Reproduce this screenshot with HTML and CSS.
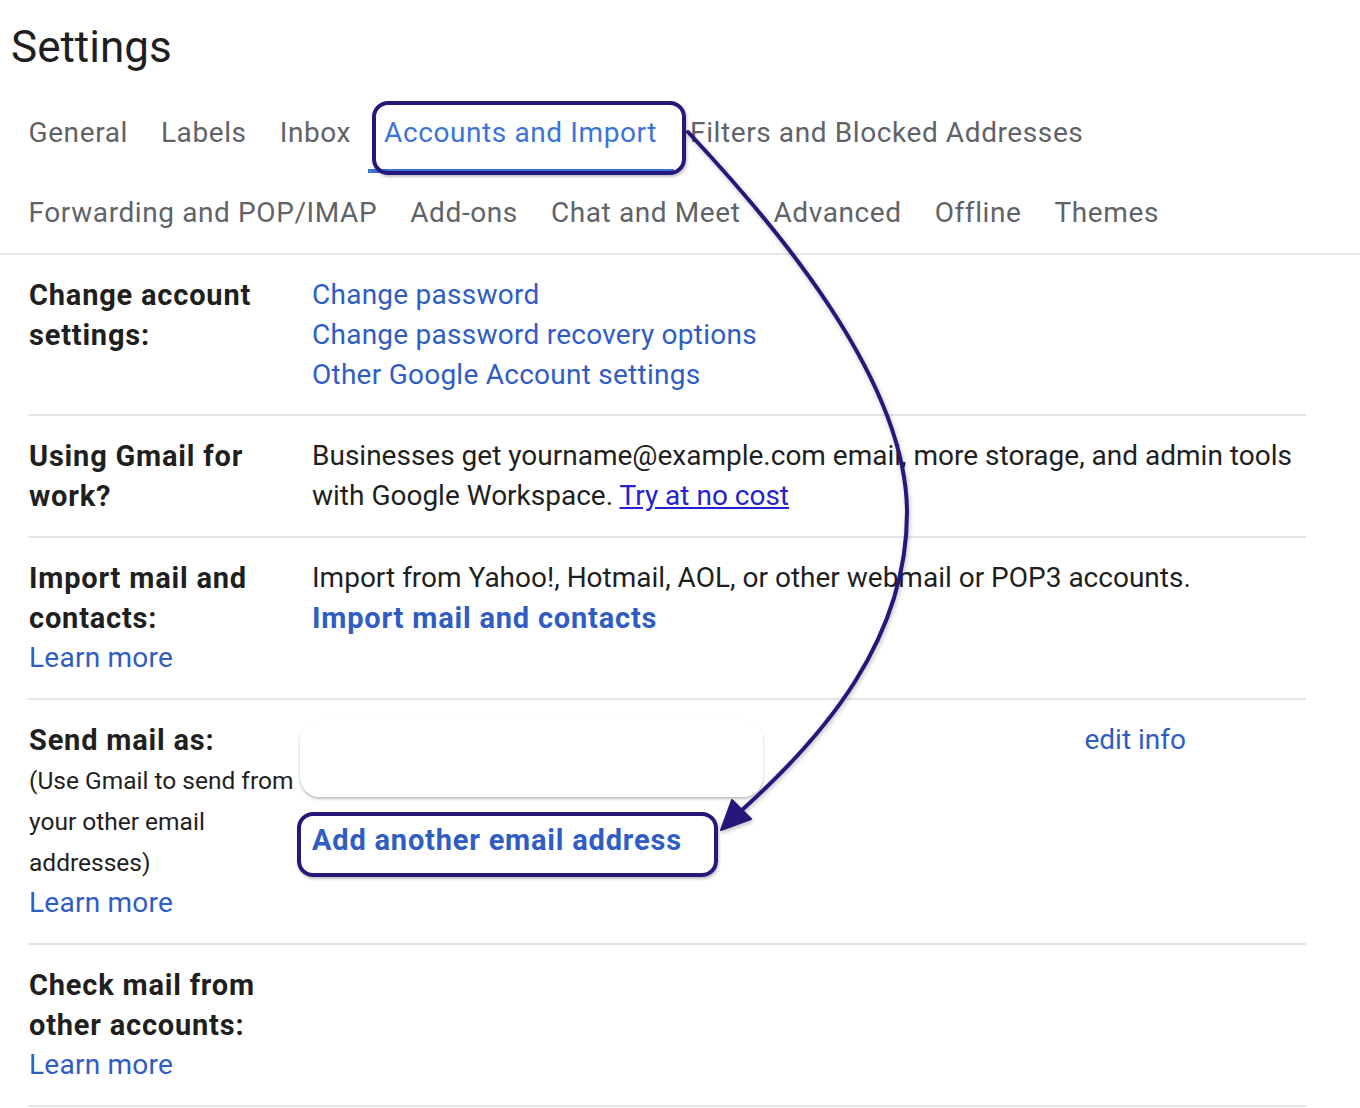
FILE: index.html
```html
<!DOCTYPE html>
<html lang="en">
<head>
    <meta charset="UTF-8">
    <meta name="viewport" content="width=device-width, initial-scale=1.0">
    <title>Settings - Accounts and Import</title>
    <link rel="stylesheet" href="styles.css">
</head>
<body>
    <div class="page">
        <h1 class="title">Settings</h1>

        <div class="tabs">
            <div class="tab-row">
                <a class="tab">General</a>
                <a class="tab">Labels</a>
                <a class="tab">Inbox</a>
                <a class="tab active callout callout-tab">Accounts and Import</a>
                <a class="tab">Filters and Blocked Addresses</a>
            </div>
            <div class="tab-row">
                <a class="tab">Forwarding and POP/IMAP</a>
                <a class="tab">Add-ons</a>
                <a class="tab">Chat and Meet</a>
                <a class="tab">Advanced</a>
                <a class="tab">Offline</a>
                <a class="tab">Themes</a>
            </div>
        </div>

        <div class="settings">
            <div class="row">
                <div class="label">
                    <span class="label-title">Change account settings:</span>
                </div>
                <div class="value">
                    <a class="link">Change password</a><br>
                    <a class="link">Change password recovery options</a><br>
                    <a class="link">Other Google Account settings</a>
                </div>
            </div>

            <div class="row">
                <div class="label">
                    <span class="label-title">Using Gmail for work?</span>
                </div>
                <div class="value">
                    Businesses get yourname@example.com email, more storage, and admin tools
                    with Google Workspace. <a class="plain-link">Try at no cost</a>
                </div>
            </div>

            <div class="row">
                <div class="label">
                    <span class="label-title">Import mail and contacts:</span><br>
                    <a class="link">Learn more</a>
                </div>
                <div class="value">
                    Import from Yahoo!, Hotmail, AOL, or other webmail or POP3 accounts.<br>
                    <a class="link strong">Import mail and contacts</a>
                </div>
            </div>

            <div class="row">
                <div class="label">
                    <span class="label-title">Send mail as:</span>
                    <div class="label-note">(Use Gmail to send from your other email addresses)</div>
                    <a class="link">Learn more</a>
                </div>
                <div class="value">
                    <div class="sender">
                        <div class="sender-card"></div>
                        <a class="link edit">edit info</a>
                    </div>
                    <a class="link strong callout callout-add">Add another email address</a>
                </div>
            </div>

            <div class="row">
                <div class="label">
                    <span class="label-title">Check mail from other accounts:</span><br>
                    <a class="link">Learn more</a>
                </div>
                <div class="value"></div>
            </div>
        </div>

        <!-- annotation arrow drawn over the page -->
        <svg class="arrow" width="1360" height="1108" viewBox="0 0 1360 1108">
            <path d="M 688 132 C 780 230, 905 380, 907 510 C 908 640, 822 738, 742 810"
                  fill="none" stroke="#27177a" stroke-width="4" stroke-linecap="round"/>
            <polygon points="721,830 732,800 751,819" fill="#27177a" stroke="#27177a" stroke-width="2" stroke-linejoin="round"/>
        </svg>
    </div>
</body>
</html>
```

FILE: styles.css
```css
body {
    margin: 0;
    padding: 0;
    background: #fff;
    font-family: Roboto, "Noto Sans", Arial, sans-serif;
    color: #1f1f1f;
}
.page {
    position: relative;
    width: 1360px;
    min-height: 1108px;
}
a {
    cursor: pointer;
}

/* header */
.title {
    margin: 0;
    padding: 19px 0 18px 11px;
    font-size: 44px;
    font-weight: 400;
    line-height: 56px;
    color: #1f1f1f;
}

/* tabs */
.tabs {
    padding-left: 12px;
    border-bottom: 2px solid #e8e8e8;
}
.tab-row {
    display: flex;
    height: 80px;
}
.tab {
    padding: 0 16.5px;
    font-size: 28px;
    line-height: 80px;
    letter-spacing: 0.6px;
    color: #5f6368;
    white-space: nowrap;
}
.tab.active {
    color: #3b73da;
    box-shadow: inset 0 -4px 0 #3b73da;
}

/* callout boxes drawn on top */
.callout {
    position: relative;
}
.callout::after {
    content: "";
    position: absolute;
    border: 4px solid #27177a;
    border-radius: 16px;
    box-shadow: 1px 2px 3px rgba(0, 0, 0, 0.25);
    pointer-events: none;
}
.callout-tab::after {
    top: 8px;
    left: 4px;
    right: -12px;
    bottom: -2px;
}
.callout-add::after {
    top: -8px;
    left: -15px;
    right: -36px;
    bottom: -17px;
}

/* settings rows */
.settings {
    margin-left: 28px;
    width: 1278px;
}
.row {
    display: grid;
    grid-template-columns: 284px 1fr;
    padding: 20px 0 19px;
    border-bottom: 2px solid #e5e5e5;
    font-size: 28px;
    line-height: 40px;
}
.row + .row {
    padding-bottom: 20px;
}
.label {
    padding-left: 1px;
}
.label-title {
    font-size: 29px;
    font-weight: 700;
    letter-spacing: 0.8px;
    vertical-align: top;
    color: #1f1f1f;
}
.label-note {
    font-size: 24.5px;
    line-height: 41px;
    color: #1f1f1f;
}
.value {
    color: #1f1f1f;
}
.link {
    color: #2f5dc4;
    letter-spacing: 0.25px;
}
.link.strong {
    font-size: 29px;
    font-weight: 700;
    letter-spacing: 0.8px;
    vertical-align: top;
}
.plain-link {
    color: #2424cf;
    text-decoration: underline;
}

/* send mail as */
.sender {
    display: flex;
    align-items: flex-start;
}
.sender-card {
    width: 463px;
    height: 77px;
    margin-left: -12px;
    background: #fff;
    border-radius: 20px;
    box-shadow: 0 2px 3px rgba(0, 0, 0, 0.25);
}
.edit {
    margin-left: auto;
    margin-right: 120px;
    letter-spacing: 0;
}
.callout-add {
    display: inline-block;
    margin-top: 23px;
}

/* annotation */
.arrow {
    position: absolute;
    top: 0;
    left: 0;
    pointer-events: none;
    filter: drop-shadow(1px 2px 2px rgba(0, 0, 0, 0.25));
}
```
